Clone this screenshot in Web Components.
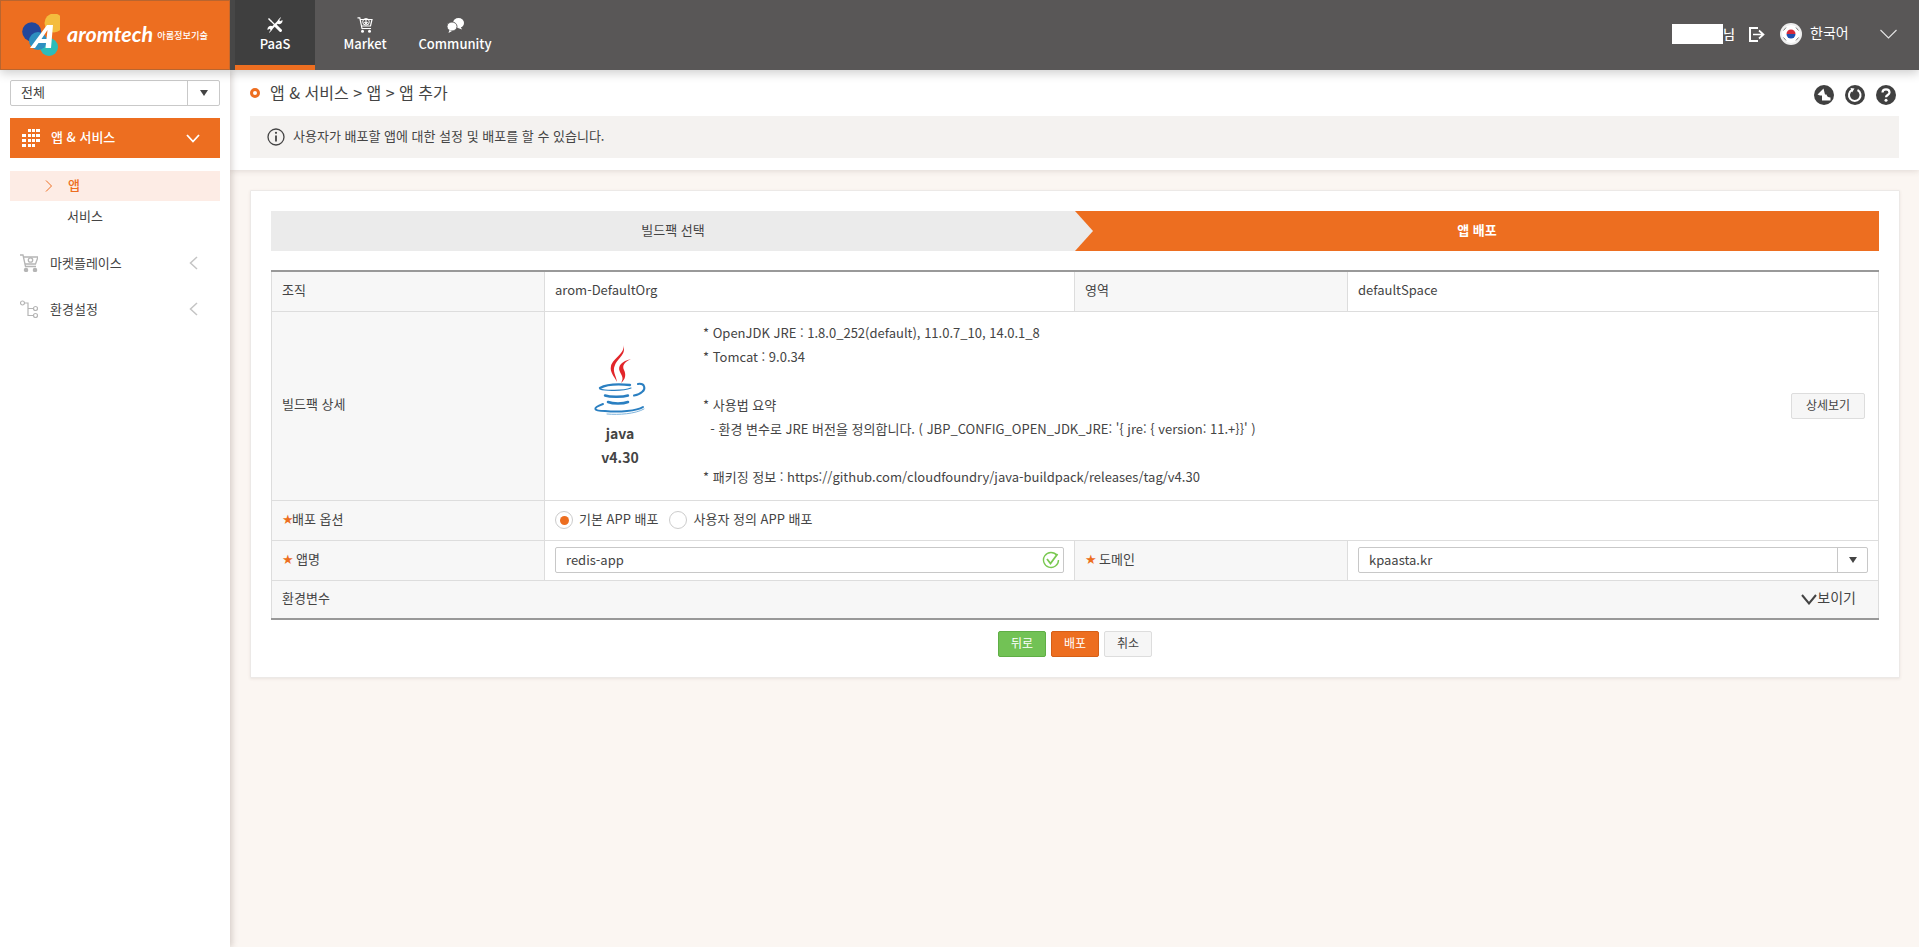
<!DOCTYPE html>
<html lang="ko"><head><meta charset="utf-8"><title>앱 추가</title>
<style>
html,body{margin:0;padding:0;height:100%}
body{font:13px/1.4 "Noto Sans CJK KR","Noto Sans",sans-serif;color:#444;background:#fbf6f2;overflow:hidden}
app-shell{height:947px}
</style></head><body>
<app-shell>
  <app-header slot="top"></app-header>
  <side-bar slot="side"></side-bar>
  <page-head slot="main" crumb="앱 &amp; 서비스 &gt; 앱 &gt; 앱 추가" desc="사용자가 배포할 앱에 대한 설정 및 배포를 할 수 있습니다."></page-head>
  <deploy-card slot="main"></deploy-card>
</app-shell>
<script>
function def(name, html, init){
  customElements.define(name, class extends HTMLElement{
    constructor(){super();const r=this.attachShadow({mode:'open'});r.innerHTML=typeof html==='function'?html(this):html;}
    connectedCallback(){ if(init) init(this); }
  });
}
def('app-shell',`<style>
:host{display:flex;flex-direction:column;height:100%}
.top{position:relative;z-index:3;flex:none}
.body{flex:1;display:flex;min-height:0}
.side{flex:none;width:230px;background:#fff;box-shadow:2px 0 6px rgba(80,60,50,.22);position:relative;z-index:2}
.main{flex:1;min-width:0}
</style><div class="top"><slot name="top"></slot></div>
<div class="body"><div class="side"><slot name="side"></slot></div><div class="main"><slot name="main"></slot></div></div>`);

def('app-logo',`<style>
:host{display:flex;align-items:center;width:230px;height:70px;box-sizing:border-box;background:#ed6e20;border:1px solid #b9652f;border-right-color:#c9682a;padding-left:21px}
svg{flex:none;display:block}
.a{font:italic 700 21.500px/1 "Lato","Liberation Sans",sans-serif;color:#fff;margin-left:7px;transform:translateY(0)}
.k{font:500 9.200px/1 "Noto Sans CJK KR",sans-serif;color:#fff;margin-left:4px;white-space:nowrap;transform:translateY(1px)}
</style>
<svg width="38" height="42" viewBox="0 0 38 42"><circle cx="9.700" cy="17.700" r="9.500" fill="#23479b"/><circle cx="32" cy="9" r="9.500" fill="#f4bc3e"/><circle cx="27" cy="33" r="9" fill="#2dbcb9"/><circle cx="16" cy="27" r="9" fill="#2d8fc0"/><path d="M8 34 L25 11 H31 L29 34 H23.500 L24 29 H16.500 L13 34Z M19.500 25 H24.500 L25.500 16Z" fill="#fff" fill-rule="evenodd"/></svg>
<span class="a">aromtech</span><span class="k">아롬정보기술</span>`);

def('nav-tab',(h)=>`<style>
:host{display:flex;flex-direction:column;align-items:center;box-sizing:border-box;height:70px;padding-top:15px;color:#fff;font:500 13px/20px "Noto Sans CJK KR",sans-serif;width:${h.getAttribute('w')}px}
:host([active]){background:#3f3f3f;border-bottom:5px solid #ed6e20}
.i{height:20px;display:flex;align-items:center;justify-content:center}
.t{margin-top:-1px}
</style><div class="i"><slot></slot></div><div class="t">${h.getAttribute('label')}</div>`);

def('app-header',`<style>
:host{display:flex;height:70px;background:#595757;box-shadow:0 3px 10px rgba(0,0,0,.2);color:#fff}
.strip{width:5px;background:#474747}
.nav{display:flex}
.r{margin-left:auto;display:flex;align-items:center;height:70px}
.mask{width:51px;height:20px;background:#fff;margin-right:0;transform:translateY(-1px)}
.nm{font-weight:500;font-size:13px;width:12px;margin-right:14px;transform:translateY(-1px)}
.lang{font-size:14px;margin-left:8px;width:38px;white-space:nowrap;transform:translateY(-2px)}
.flag{margin-left:15px;transform:translateY(-1px);display:block}
.lo{display:block;transform:translateY(-1px)}
.ch{margin-left:32px;margin-right:22px;display:block;transform:translateY(-1px)}
</style>
<app-logo></app-logo><div class="strip"></div>
<div class="nav">
<nav-tab active label="PaaS" w="80"><svg width="16" height="16" viewBox="0 0 16 16" fill="none" stroke="#fff"><path d="M1.500 1.500 L4 4" stroke-width="1.500"/><path d="M3.500 3.500 L9 9" stroke-width="1.200"/><path d="M9 9 L13.500 13.500" stroke-width="3" stroke-linecap="round"/><path d="M3.500 12.500 L11.500 4.500" stroke-width="2.200"/><path d="M15.500 3 a3.500 3.500 0 0 1 -5 3.800 l.3-3.500 2.500-2.800 a3 3 0 0 1 .8.100 l-1.800 2.400 .8 1.200 1.500-.6z" fill="#fff" stroke="none"/><path d="M.5 13 a3.500 3.500 0 0 1 5-3.800 l-.3 3.500 -2.500 2.800 a3 3 0 0 1 -.8-.1 l1.800-2.400 -.8-1.200 -1.500.6z" fill="#fff" stroke="none"/></svg></nav-tab>
<nav-tab label="Market" w="100"><svg width="16" height="16" viewBox="0 0 16 16" fill="none" stroke="#fff" stroke-width="1.200"><path d="M.5 .8 H2.800 L5 11.500 H14"/><path d="M3 2.500 H15 L13.500 9 H4.500"/><circle cx="9" cy="4.800" r="3.300" stroke-width="1"/><path d="M9 2.500 V6.500 M7.400 5 L9 6.800 10.600 5" stroke-width="1.100"/><circle cx="5.500" cy="14.300" r="1.500" fill="#fff" stroke="none"/><circle cx="12.500" cy="14.300" r="1.500" fill="#fff" stroke="none"/></svg></nav-tab>
<nav-tab label="Community" w="80"><svg width="17" height="15" viewBox="0 0 17 15" fill="#fff"><ellipse cx="11.500" cy="5" rx="5.500" ry="5"/><path d="M13.500 8.500 l1.500 3 -4-1.500z"/><ellipse cx="5" cy="8.500" rx="5" ry="4.500" stroke="#595757" stroke-width=".9"/><path d="M2.500 12 l-1 3 3.500-2z"/></svg></nav-tab>
</div>
<div class="r"><div class="mask"></div><div class="nm">님</div>
<svg class="lo" width="16" height="15" viewBox="0 0 16 15" fill="none" stroke="#fff" stroke-width="2"><path d="M9 1 H1 V14 H9"/><path d="M4 7.500 H14 M10 3.500 L14.500 7.500 10 11.500" stroke-width="1.700"/></svg>
<svg class="flag" width="22" height="22" viewBox="0 0 22 22"><circle cx="11" cy="11" r="11" fill="#eee"/><circle cx="11" cy="11" r="9" fill="#fff"/><path d="M6.500 11 a4.500 4.500 0 0 1 9 0z" fill="#d6293a"/><path d="M6.500 11 a4.500 4.500 0 0 0 9 0z" fill="#1f4fae"/><g stroke="#777" stroke-width="1"><path d="M3.500 7.500 L6 4.500 M16 4.500 L18.500 7.500 M3.500 14.500 L6 17.500 M16 17.500 L18.500 14.500"/></g></svg>
<div class="lang">한국어</div>
<svg class="ch" width="17" height="10" viewBox="0 0 17 10" fill="none" stroke="#e5e5e5" stroke-width="1.100"><path d="M.5 1 L8.500 9 16.500 1"/></svg>
</div>`);

def('side-item',(h)=>`<style>
:host{display:flex;align-items:center;box-sizing:border-box;height:24px;margin:20px 0 22px 0;padding-left:20px;font-size:13px;color:#444}
.i{width:18px;display:flex;margin-right:12px}
.c{margin-left:auto;margin-right:32px;display:block}
</style><span class="i"><slot></slot></span>${h.getAttribute('label')}
<svg class="c" width="9" height="14" viewBox="0 0 9 14" fill="none" stroke="#c4c4c4" stroke-width="1.500"><path d="M8 1 L1.500 7 8 13"/></svg>`);

def('side-bar',`<style>
:host{display:block;padding:10px 10px 0}
.sel{display:flex;height:26px;box-sizing:border-box;border:1px solid #c9c9c9;border-radius:2px;align-items:center}
.sel span{flex:1;padding-left:10px;font-size:13px;line-height:24px;transform:translateY(-1px)}
.sel b{width:30px;height:24px;border-left:1px solid #c9c9c9;display:flex;align-items:center;justify-content:center;box-sizing:content-box;padding-left:1px}
.tri{width:0;height:0;border:4.500px solid transparent;border-top:6px solid #444;border-bottom:0}
.m{margin-top:12px;height:40px;background:#ed6e20;color:#fff;display:flex;align-items:center;font-weight:500;font-size:13px;padding-left:12px}
.m span{margin-left:11px;transform:translateY(-1px)}
.m svg.c{margin-left:auto;margin-right:20px}
.s{margin-top:13px;height:30px;background:#fdece5;color:#ed6e20;display:flex;align-items:center;padding-left:35px;font-weight:500}
.s span{margin-left:16px;transform:translateY(-1px)}
.s2{height:30px;display:flex;align-items:center;padding-left:57px}
.rest{margin:0 -10px 0 -10px}
</style>
<div class="sel"><span>전체</span><b><i class="tri"></i></b></div>
<div class="m"><svg width="18" height="18" viewBox="0 0 18 18" fill="#fff"><path d="M6 0h3v3H6zM10 0h3v3h-3zM14 0h4v3h-4zM0 5h4v3H0zM6 5h3v3H6zM10 5h3v3h-3zM14 5h4v3h-4zM0 10h4v3H0zM6 10h3v3H6zM10 10h3v3h-3zM14 10h4v3h-4zM0 15h4v3H0zM6 15h3v3H6zM10 15h3v3h-3z"/></svg><span>앱 &amp; 서비스</span>
<svg class="c" width="14" height="9" viewBox="0 0 14 9" fill="none" stroke="#fff" stroke-width="1.800"><path d="M1 1 L7 7.500 13 1"/></svg></div>
<div class="s"><svg width="7" height="12" viewBox="0 0 7 12" fill="none" stroke="#ed6e20" stroke-width="1"><path d="M1 .5 L6.500 6 1 11.500"/></svg><span>앱</span></div>
<div class="s2">서비스</div>
<div class="rest">
<side-item label="마켓플레이스"><svg width="18" height="18" viewBox="0 0 18 18" fill="none" stroke="#b5b5b5" stroke-width="1.300"><path d="M0 1 H3 L5.500 12.500 H16"/><path d="M3.500 3 H18 L15.500 10 H5"/><circle cx="10.500" cy="6" r="2.200"/><circle cx="6" cy="16" r="1.600" fill="#b5b5b5"/><circle cx="15" cy="16" r="1.600" fill="#b5b5b5"/></svg></side-item>
<side-item label="환경설정"><svg width="18" height="18" viewBox="0 0 18 18" fill="none" stroke="#b5b5b5" stroke-width="1.200"><circle cx="2.500" cy="3" r="2"/><circle cx="15.500" cy="8.500" r="2"/><circle cx="15.500" cy="15.500" r="2"/><path d="M4.500 3 H8 V15.500 H13.500 M8 8.500 H13.500"/></svg></side-item>
</div>`);

def('page-head',(h)=>`<style>
:host{display:block;background:#fff;height:100px;box-sizing:border-box;padding:0 20px 0 20px;box-shadow:0 1px 6px rgba(90,70,60,.16)}
.top{display:flex;align-items:center;height:46px}
.dot{width:10px;height:10px;box-sizing:border-box;border:3px solid #ed6e20;border-radius:50%;margin-right:10px}
.cr{font-size:16px;color:#444;transform:translateY(-1px)}
.tools{margin-left:auto;display:flex;gap:11px;margin-right:3px;transform:translateY(2px)}
svg{display:block}
.desc{height:42px;background:#f4f2f0;display:flex;align-items:center;padding-left:17px;font-size:13px;color:#444}
.desc svg{margin-right:8px}
.desc span{transform:translateY(-1px)}
</style>
<div class="top"><i class="dot"></i><span class="cr">${h.getAttribute('crumb').replace(/&/g,'&amp;').replace(/</g,'&lt;')}</span>
<div class="tools">
<svg width="20" height="20" viewBox="0 0 20 20"><circle cx="10" cy="10" r="10" fill="#404040"/><path d="M3.500 9.500 L9.500 3.500 L11 9.500 H12.500 C13 11.500 14 12.500 16.500 12.500 V15.500 H8 V10.500 H6 Z" fill="#fff"/></svg>
<svg width="20" height="20" viewBox="0 0 20 20"><circle cx="10" cy="10" r="10" fill="#404040"/><path d="M12.500 5 A5.800 5.800 0 1 1 7 5" fill="none" stroke="#fff" stroke-width="2"/><path d="M5.500 3 L9.500 3.500 7 7.500z" fill="#fff"/></svg>
<svg width="20" height="20" viewBox="0 0 20 20"><circle cx="10" cy="10" r="10" fill="#404040"/><path d="M6.500 7.500 C6.500 3.300 13.500 3.300 13.500 7.500 C13.500 10 10 10 10 12.300" fill="none" stroke="#fff" stroke-width="2.200"/><circle cx="10" cy="15.300" r="1.500" fill="#fff"/></svg>
</div></div>
<div class="desc"><svg width="18" height="18" viewBox="0 0 18 18" fill="none" stroke="#444" stroke-width="1.300"><circle cx="9" cy="9" r="8"/><path d="M9 7.500 V13.500" stroke-width="1.800"/><circle cx="9" cy="4.800" r="1.100" fill="#444" stroke="none"/></svg><span>${h.getAttribute('desc')}</span></div>`);

def('step-bar',`<style>
:host{display:flex;height:40px;font-size:13px}
.a{flex:0 0 804px;background:#ebebeb;display:flex;align-items:center;justify-content:center;color:#444;padding-left:0}
.b{flex:1;background:#ed6e20;position:relative;display:flex;align-items:center;justify-content:center;color:#fff;font-weight:700}
.b:before{content:"";position:absolute;left:0;top:0;width:18px;height:40px;background:#ebebeb;clip-path:polygon(0 0,100% 50%,0 100%)}
span{transform:translateY(-1px)}
</style><div class="a"><span>빌드팩 선택</span></div><div class="b"><span>앱 배포</span></div>`);

def('java-logo',`<style>:host{display:block;width:54px;height:70px}svg{display:block}</style>
<svg width="54" height="70" viewBox="0 0 54 70" fill="none">
<path d="M30 0 C33 8 20 13 18 21 C16.500 27 21 31 24 37 C23 30 19 26 22 20 C25 13 34 9 30 0Z" fill="#e2262a"/>
<path d="M38 14 C29 16 24 21 27 27 C29 31 31 33 28 38 C33 34 33 29 31 25 C29 21 31 17 38 14Z" fill="#e2262a"/>
<g stroke="#2a7fc1" stroke-linecap="round">
<path d="M7 43 C14 39 27 39 37 40" stroke-width="2.400"/><path d="M7 44 C12 46 30 46 38 43" stroke-width="1.200"/>
<path d="M45 39 C52 38 53 44 49 47 C47 49 44 50 41 50.500" stroke-width="2"/>
<path d="M12 50.500 C18 52.500 30 52 35 50.500" stroke-width="2.400"/>
<path d="M15 57 C20 59 30 59 35 57" stroke-width="2.600"/>
<path d="M10 59 C-1 63 0 66 12 66 C26 67.500 44 66 50 62" stroke-width="2"/>
<path d="M14 69 C26 70 42 69 51 64" stroke-width="1" stroke="#7fb4dc"/>
</g></svg>`);

def('mini-btn',(h)=>{const k=h.getAttribute('kind');const c={g:'background:#72c255;border-color:#5fae45;color:#fff',o:'background:#ed6e20;border-color:#d65f16;color:#fff',w:'background:#f6f6f6;border-color:#ddd;color:#444'}[k];
return `<style>:host{display:inline-flex;width:48px;height:26px;box-sizing:border-box;border:1px solid;border-radius:2px;align-items:center;justify-content:center;font-size:12px;${c}}span{transform:translateY(-1px)}</style><span><slot></slot></span>`});

def('star-mark',`<style>:host{display:inline-block;color:#ed6e20;font:13px/1 "DejaVu Sans",sans-serif;width:10px;overflow:visible}</style>★`);
def('radio-dot',(h)=>`<style>:host{display:inline-flex;width:18px;height:18px;box-sizing:border-box;border:1px solid #ccc;border-radius:50%;align-items:center;justify-content:center;background:#fff}
i{width:9px;height:9px;border-radius:50%;background:#ed6e20;display:${h.hasAttribute('on')?'block':'none'}}</style><i></i>`);

def('deploy-table',`<style>
:host{display:block;margin-top:19px;font-size:13px;color:#444}
table{border-collapse:collapse;width:100%;table-layout:fixed;border-top:2px solid #999;border-bottom:2px solid #999;border-left:1px solid #ddd;border-right:1px solid #ddd}
th,td{border:1px solid #ddd;font-weight:400;text-align:left;padding:0 10px;vertical-align:middle}
tr:first-child>*{border-top:0} tr:last-child>*{border-bottom:0}
th{background:#f7f7f7}
.txt{transform:translateY(-1px);display:block}
.bp{display:flex;align-items:center;height:188px}
.bl{width:136px;margin-left:-3px;display:flex;flex-direction:column;align-items:center;font-weight:700;line-height:24px;font-size:14px;flex:none;color:#444;transform:translateY(2px)}
.bl java-logo{margin-bottom:6px;margin-top:-2px}
.bl div{height:24px}
.info{line-height:24px;margin-left:15px;font-size:13px;white-space:pre;flex:1;transform:translateY(-1px)}
.more{flex:none;width:74px;height:26px;box-sizing:border-box;background:#f6f6f6;border:1px solid #ddd;border-radius:2px;font-size:12px;display:flex;align-items:center;justify-content:center;margin-right:3px;margin-left:auto}
.rad{display:flex;align-items:center}
.rad radio-dot+span{margin-left:6px;transform:translateY(-1px)}
.rad span+radio-dot{margin-left:11px}
.inp{height:26px;box-sizing:border-box;border:1px solid #c8c8c8;border-radius:2px;display:flex;align-items:center;padding-left:10px;background:#fff;position:relative}
.inp svg{position:absolute;right:3px;top:3px}
.dom b{position:absolute;right:0;top:0;width:29px;height:24px;border-left:1px solid #c8c8c8;display:flex;align-items:center;justify-content:center}
.dom i{width:0;height:0;border:4px solid transparent;border-top:6px solid #444;border-bottom:0}
.env{display:flex;justify-content:space-between;align-items:center}
.show{display:flex;align-items:center;margin-right:12px;font-size:14px}
.sp{margin-right:4px}
</style>
<table><colgroup><col style="width:273px"><col style="width:530px"><col style="width:273px"><col></colgroup>
<tr style="height:40px"><th><span class="txt">조직</span></th><td><span class="txt">arom-DefaultOrg</span></td><th><span class="txt">영역</span></th><td><span class="txt">defaultSpace</span></td></tr>
<tr style="height:189px"><th><span class="txt">빌드팩 상세</span></th><td colspan="3"><div class="bp">
<div class="bl"><java-logo></java-logo><div>java</div><div>v4.30</div></div>
<div class="info">* OpenJDK JRE : 1.8.0_252(default), 11.0.7_10, 14.0.1_8
* Tomcat : 9.0.34

* 사용법 요약
  - 환경 변수로 JRE 버전을 정의합니다. ( JBP_CONFIG_OPEN_JDK_JRE: '{ jre: { version: 11.+}}' )

* 패키징 정보 : https://github.com/cloudfoundry/java-buildpack/releases/tag/v4.30</div>
<div class="more"><span>상세보기</span></div></div></td></tr>
<tr style="height:40px"><th><span class="txt"><star-mark></star-mark>배포 옵션</span></th><td colspan="3"><div class="rad"><radio-dot on></radio-dot><span>기본 APP 배포</span><radio-dot></radio-dot><span>사용자 정의 APP 배포</span></div></td></tr>
<tr style="height:40px"><th><span class="txt"><star-mark class="sp"></star-mark>앱명</span></th><td><div class="inp"><span>redis-app</span><svg width="18" height="18" viewBox="0 0 18 18" fill="none" stroke="#79c850" stroke-width="1.400"><path d="M15 4.500 A7.500 7.500 0 1 0 16.500 9"/><path d="M5 8 L8.500 12.500 15.500 3" stroke-width="1.800"/></svg></div></td><th><span class="txt"><star-mark class="sp"></star-mark>도메인</span></th><td><div class="inp dom"><span>kpaasta.kr</span><b><i></i></b></div></td></tr>
<tr style="height:39px"><th colspan="4"><div class="env"><span class="txt">환경변수</span><span class="show"><svg width="16" height="11" viewBox="0 0 16 11" fill="none" stroke="#444" stroke-width="2"><path d="M1 1 L8 9.500 15 1"/></svg><span class="txt">보이기</span></span></div></th></tr>
</table>`);

def('deploy-card',`<style>
:host{display:block;box-sizing:border-box;margin:20px 19px 0 20px;height:488px;background:#fff;border:1px solid #ece9e7;padding:20px;border-radius:1px;box-shadow:0 1px 3px rgba(90,70,60,.1)}
.act{display:flex;justify-content:center;gap:5px;margin-top:11px;padding-left:0}
</style><step-bar></step-bar><deploy-table></deploy-table>
<div class="act"><mini-btn kind="g">뒤로</mini-btn><mini-btn kind="o">배포</mini-btn><mini-btn kind="w">취소</mini-btn></div>`);
</script>
</body></html>
